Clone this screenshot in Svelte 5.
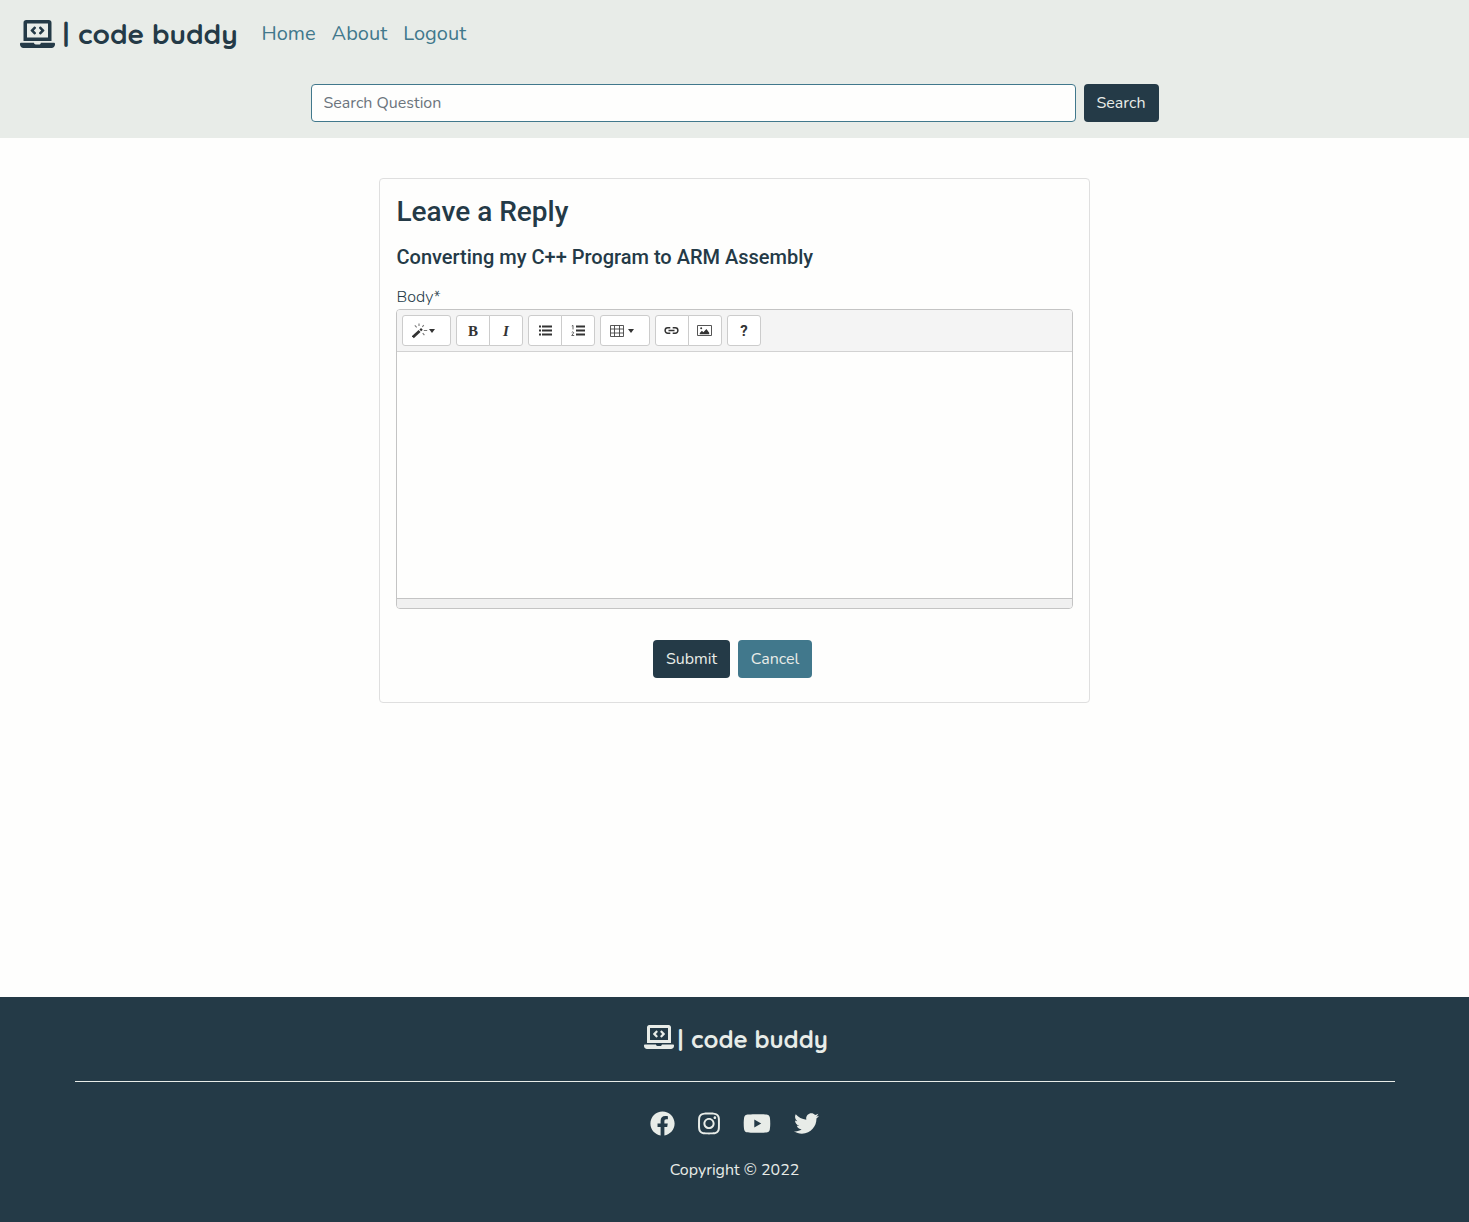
<script>
  const links = ['Home', 'About', 'Logout'];
  const social = [
    { name: 'Facebook', w: 512, d: 'M504 256C504 119 393 8 256 8S8 119 8 256c0 123.78 90.69 226.38 209.25 245V327.69h-63V256h63v-54.64c0-62.15 37-96.48 93.67-96.48 27.14 0 55.52 4.84 55.52 4.84v61h-31.28c-30.8 0-40.41 19.12-40.41 38.73V256h68.78l-11 71.69h-57.78V501C413.31 482.38 504 379.78 504 256z' },
    { name: 'Instagram', w: 448, d: 'M224.1 141c-63.6 0-114.9 51.3-114.9 114.9s51.3 114.9 114.9 114.9S339 319.5 339 255.9 287.7 141 224.1 141zm0 189.6c-41.1 0-74.7-33.5-74.7-74.7s33.5-74.7 74.7-74.7 74.7 33.5 74.7 74.7-33.6 74.7-74.7 74.7zm146.4-194.3c0 14.9-12 26.8-26.8 26.8-14.9 0-26.8-12-26.8-26.8s12-26.8 26.8-26.8 26.8 12 26.8 26.8zm76.1 27.2c-1.7-35.9-9.9-67.7-36.2-93.9-26.2-26.2-58-34.4-93.9-36.2-37-2.1-147.9-2.1-184.9 0-35.8 1.7-67.6 9.9-93.9 36.1s-34.4 58-36.2 93.9c-2.1 37-2.1 147.9 0 184.9 1.7 35.9 9.9 67.7 36.2 93.9s58 34.4 93.9 36.2c37 2.1 147.9 2.1 184.9 0 35.9-1.7 67.7-9.9 93.9-36.2 26.2-26.2 34.4-58 36.2-93.9 2.1-37 2.1-147.8 0-184.8zM398.8 388c-7.8 19.6-22.9 34.7-42.6 42.6-29.5 11.7-99.5 9-132.1 9s-102.7 2.6-132.1-9c-19.6-7.8-34.7-22.9-42.6-42.6-11.7-29.5-9-99.5-9-132.1s-2.6-102.7 9-132.1c7.8-19.6 22.9-34.7 42.6-42.6 29.5-11.7 99.5-9 132.1-9s102.7-2.6 132.1 9c19.6 7.8 34.7 22.9 42.6 42.6 11.7 29.5 9 99.5 9 132.1s2.7 102.7-9 132.1z' },
    { name: 'YouTube', w: 576, d: 'M549.655 124.083c-6.281-23.65-24.787-42.276-48.284-48.597C458.781 64 288 64 288 64S117.22 64 74.629 75.486c-23.497 6.322-42.003 24.947-48.284 48.597-11.412 42.867-11.412 132.305-11.412 132.305s0 89.438 11.412 132.305c6.281 23.65 24.787 41.5 48.284 47.821C117.22 448 288 448 288 448s170.78 0 213.371-11.486c23.497-6.321 42.003-24.171 48.284-47.821 11.412-42.867 11.412-132.305 11.412-132.305s0-89.438-11.412-132.305zm-317.51 213.508V175.185l142.739 81.205-142.739 81.201z' },
    { name: 'Twitter', w: 512, d: 'M459.37 151.716c.325 4.548.325 9.097.325 13.645 0 138.72-105.583 298.558-298.558 298.558-59.452 0-114.68-17.219-161.137-47.106 8.447.974 16.568 1.299 25.34 1.299 49.055 0 94.213-16.568 130.274-44.832-46.132-.975-84.792-31.188-98.112-72.772 6.498.974 12.995 1.624 19.818 1.624 9.421 0 18.843-1.3 27.614-3.573-48.081-9.747-84.143-51.98-84.143-102.985v-1.299c13.969 7.797 30.214 12.67 47.431 13.319-28.264-18.843-46.781-51.005-46.781-87.391 0-19.492 5.197-37.36 14.294-52.954 51.655 63.675 129.3 105.258 216.365 109.807-1.624-7.797-2.599-15.918-2.599-24.04 0-57.828 46.782-104.934 104.934-104.934 30.213 0 57.502 12.67 76.67 33.137 23.715-4.548 46.456-13.32 66.599-25.34-7.798 24.366-24.366 44.833-46.132 57.827 21.117-2.273 41.584-8.122 60.426-16.243-14.292 20.791-32.161 39.308-52.628 54.253z' }
  ];
</script>

{#snippet laptop()}
  <svg class="laptop" viewBox="0 0 640 512" aria-hidden="true"><path fill="currentColor" d="M255.03 261.65c6.25 6.25 16.38 6.25 22.63 0l11.31-11.31c6.25-6.25 6.25-16.38 0-22.63L253.25 192l35.71-35.72c6.25-6.25 6.25-16.38 0-22.63l-11.31-11.31c-6.25-6.25-16.38-6.25-22.63 0l-58.34 58.34c-6.25 6.25-6.25 16.38 0 22.63l58.35 58.34zm96.01-11.3l11.31 11.31c6.25 6.25 16.38 6.25 22.63 0l58.34-58.34c6.25-6.25 6.25-16.38 0-22.63l-58.34-58.34c-6.25-6.25-16.38-6.25-22.63 0l-11.31 11.31c-6.25 6.25-6.25 16.38 0 22.63L386.75 192l-35.71 35.72c-6.25 6.25-6.25 16.38 0 22.63zM624 416H381.54c-.74 19.81-14.71 32-32.74 32H288c-18.69 0-33.02-17.47-32.77-32H16c-8.8 0-16 7.2-16 16v16c0 35.2 28.8 64 64 64h512c35.2 0 64-28.8 64-64v-16c0-8.8-7.2-16-16-16zM576 48c0-26.4-21.6-48-48-48H112C85.6 0 64 21.6 64 48v336h512V48zm-64 272H128V64h384v256z" /></svg>
{/snippet}

<div class="page">
  <header>
    <nav>
      <a class="brand" href="#home">{@render laptop()}<span class="bar">|</span><span class="word">code buddy</span></a>
      {#each links as link}
        <a class="link" href="#{link}">{link}</a>
      {/each}
    </nav>
    <form class="search">
      <input placeholder="Search Question" aria-label="Search Question" />
      <button type="button" class="btn dark find">Search</button>
    </form>
  </header>

  <main>
    <section class="card">
      <h1>Leave a Reply</h1>
      <h2>Converting my C++ Program to ARM Assembly</h2>
      <div class="label">Body*</div>
      <div class="editor">
        <div class="toolbar">
          <div class="group">
            <button class="tool wide" aria-label="Style">
              <svg width="16" height="17" viewBox="0 0 16 17"><path d="M.8 15.2 7.6 9" stroke="#333" stroke-width="2.9" /><path d="m8.3 8.4 1.6-1.5" stroke="#333" stroke-width="2.5" /><path d="M7 1.5v2.6M2.8 3.4l1.9 1.9M11.8 3.2l-1.5 1.7M11.8 8.5h3.4M10.7 11.2l1.7 2" stroke="#777" stroke-width="1.1" fill="none" /></svg>
              <i class="caret"></i>
            </button>
          </div>
          <div class="group">
            <button class="tool serif bold">B</button>
            <button class="tool serif italic">I</button>
          </div>
          <div class="group">
            <button class="tool" aria-label="Unordered list">
              <svg width="14" height="11" viewBox="0 0 14 11"><path d="M1 1.5h2M1 5.5h2M1 9.5h2M4 1.5h10M4 5.5h10M4 9.5h10" stroke="#333" stroke-width="2" /></svg>
            </button>
            <button class="tool" aria-label="Ordered list">
              <svg width="14" height="11" viewBox="0 0 14 11"><path d="M5 1.5h9M5 5.5h9M5 9.5h9" stroke="#333" stroke-width="2" /><path d="M.8 1 2 .4v4M.7 7.5q.7-1 1.5-.5.9.8-.2 1.8L.7 10.5h2.5" fill="none" stroke="#555" stroke-width=".9" /></svg>
            </button>
          </div>
          <div class="group">
            <button class="tool grid" aria-label="Table">
              <svg width="14" height="12" viewBox="0 0 14 12"><path d="M.5.5h13v11H.5zM.5 4h13M.5 8h13M4.5.5v11M9.5.5v11" fill="none" stroke="#444" stroke-width=".9" /></svg>
              <i class="caret"></i>
            </button>
          </div>
          <div class="group">
            <button class="tool link-tool" aria-label="Link">
              <svg width="15" height="7" viewBox="0 0 15 7"><path d="M6.3.8H3.8a2.7 2.7 0 0 0 0 5.4h2.5M8.7.8h2.5a2.7 2.7 0 0 1 0 5.4H8.7M4.5 3.5h6" fill="none" stroke="#333" stroke-width="1.5" /></svg>
            </button>
            <button class="tool link-tool" aria-label="Picture">
              <svg width="15" height="11" viewBox="0 0 15 11"><path d="M.5.5h14v10H.5z" fill="none" stroke="#555" /><path d="M2.8 9.3V8l2.1-2.2 1.5 1.4 3-3.3 2.8 3.8v1.6z" fill="#333" /><circle cx="4.2" cy="3.2" r="1" fill="#333" /></svg>
            </button>
          </div>
          <div class="group"><button class="tool help">?</button></div>
        </div>
        <div class="body"></div>
        <div class="status"></div>
      </div>
      <div class="actions">
        <button class="btn dark submit">Submit</button>
        <button class="btn teal cancel">Cancel</button>
      </div>
    </section>
  </main>

  <footer>
    <div class="brand small">{@render laptop()}<span class="bar">|</span><span class="word">code buddy</span></div>
    <div class="rule"></div>
    <div class="social">
      {#each social as s}
        <svg class={s.name.toLowerCase()} viewBox="0 0 {s.w} 512" role="img" aria-label={s.name}><path fill="currentColor" d={s.d} /></svg>
      {/each}
    </div>
    <div class="copy">Copyright © 2022</div>
  </footer>
</div>

<style>
  :global(body) { background: #fefefd; }
  .page {
    display: flex; flex-direction: column; height: 1222px;
    font: 16px/24px Nunito, Lato, sans-serif; color: #243a47;
  }
  .page :global(*) { box-sizing: border-box; }
  a { text-decoration: none; color: inherit; }
  button { font: inherit; margin: 0; padding: 0; }
  header { height: 138px; flex: none; background: #e8ece8; }
  nav { display: flex; align-items: center; height: 68px; padding-left: 20px; }
  .brand {
    display: flex; align-items: center; width: 241.5px; height: 40px;
    font: 700 28px/40px Quicksand, Lato, sans-serif; white-space: nowrap;
  }
  .laptop { width: 35px; height: 28px; flex: none; margin-bottom: 1px; }
  .bar { width: 23px; padding-left: 7.5px; flex: none; }
  .link { margin-right: 16px; font-size: 20px; line-height: 30px; color: #41788c; white-space: nowrap; }
  .search { display: flex; justify-content: center; gap: 8px; padding-top: 16px; }
  input {
    width: 765px; height: 38px; padding: 0 12px; border: 1px solid #41788c; border-radius: 4px;
    background: #fefefd; font: inherit; outline: 0;
  }
  input::placeholder { color: #6c757d; opacity: 1; }
  .btn { height: 38px; border: 0; border-radius: 4px; color: #e8ece8; }
  .dark { background: #243a47; }
  .teal { background: #41788c; }
  .find { width: 75px; }
  main { flex: 1; padding-top: 40px; }
  .card {
    width: 711px; height: 525px; margin: 0 auto; padding: 16px;
    border: 1px solid #dfdfdf; border-radius: 4px;
  }
  h1, h2 { margin: 0; padding-left: .5px; font-family: Roboto, sans-serif; font-weight: 500; }
  h1 { font-size: 28px; line-height: 33px; }
  h2 { margin-top: 17px; font-size: 20px; line-height: 24px; }
  .label { margin-top: 16px; padding-left: .5px; height: 24px; font-weight: 300; }
  .editor { height: 300px; border: 1px solid #c4c4c4; border-radius: 4px; display: flex; flex-direction: column; overflow: hidden; }
  .toolbar { display: flex; gap: 5px; height: 42px; padding: 5px; background: #f4f4f4; border-bottom: 1px solid #d2d2d2; }
  .group { display: flex; height: 31px; }
  .tool {
    display: flex; align-items: center; justify-content: center; width: 34px; height: 31px;
    background: #fff; border: 1px solid #ccc; color: #333; border-radius: 3px;
  }
  .tool + .tool { margin-left: -1px; border-radius: 0 3px 3px 0; }
  .tool:first-child:not(:last-child) { border-radius: 3px 0 0 3px; }
  .wide { width: 49px; padding-left: 9px; gap: 1px; justify-content: flex-start; }
  .grid { width: 50px; padding-left: 9px; gap: 4px; justify-content: flex-start; }
  .link-tool { padding-right: 1px; }
  .caret { border: 3px solid transparent; border-top: 4px solid #333; border-bottom: 0; }
  .serif { font-family: "Liberation Serif", serif; font-weight: 700; font-size: 15px; }
  .italic { font-style: italic; }
  .help { font: 700 15px Roboto, sans-serif; }
  .body { flex: 1; background: #fefefd; }
  .status { height: 10px; background: #f0f0f0; border-top: 1px solid #c4c4c4; }
  .actions { display: flex; justify-content: center; gap: 8px; margin: 31px 4px 0 0; }
  .submit { width: 77px; }
  .cancel { width: 74px; }
  footer { height: 225px; flex: none; background: #243a47; color: #e8ece8; padding-top: 22px; display: flex; flex-direction: column; align-items: center; }
  .small { width: 184px; font-size: 24px; margin-left: 3px; }
  .small .laptop { width: 30px; height: 24px; margin-bottom: 5px; }
  .small .bar { width: 17px; padding-left: 3.5px; }
  .rule { width: 1320px; height: 1px; margin-top: 22px; background: #e8ece8; }
  .social { display: flex; gap: 23px; margin-top: 28.5px; height: 25px; }
  .social svg { width: 25px; height: 25px; }
  .social .instagram { width: 22px; }
  .social .youtube { width: 28px; }
  .copy { margin-top: 22.5px; }
</style>
